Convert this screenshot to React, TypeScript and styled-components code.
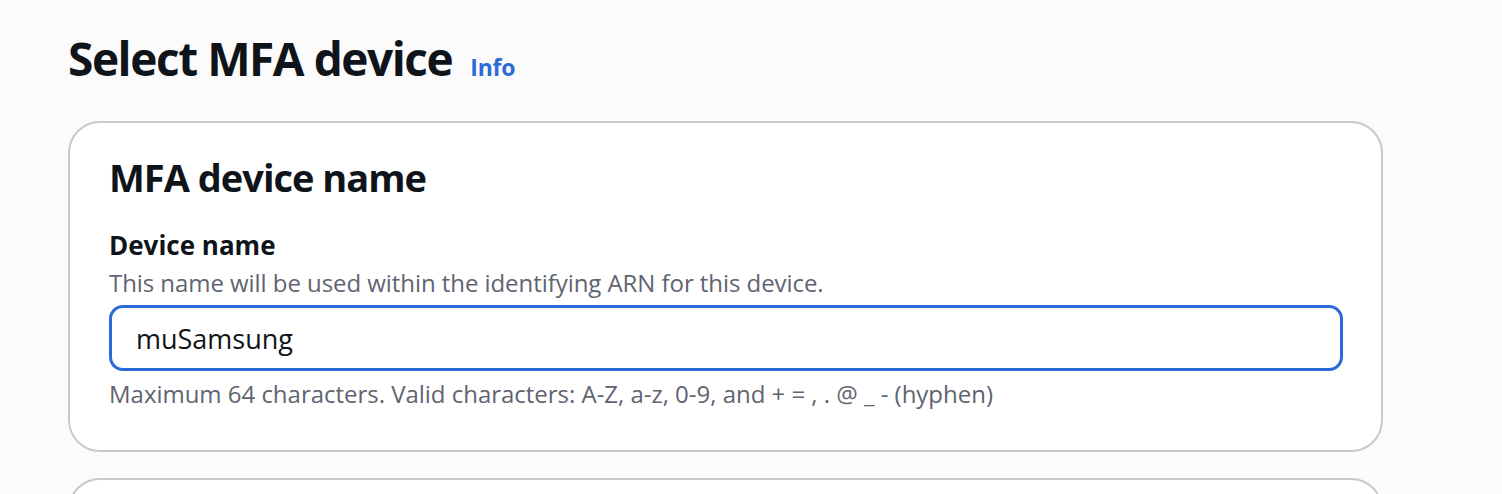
import React from "react";
import styled, { createGlobalStyle } from "styled-components";

const GlobalStyle = createGlobalStyle`
  html, body {
    margin: 0;
    padding: 0;
    background: #fbfbfb;
  }
  body {
    font-family: "Open Sans", "Noto Sans", sans-serif;
    color: #0f141a;
    overflow: hidden;
  }
`;

const Page = styled.main`
  padding: 30px 119px 0 68px;
  height: 494px;
  box-sizing: border-box;
`;

const HeaderRow = styled.div`
  display: flex;
  align-items: baseline;
  gap: 18px;
  margin-bottom: 35px;
`;

const Title = styled.h1`
  margin: 0;
  font-size: 46px;
  line-height: 56px;
  font-weight: 700;
  letter-spacing: -1.45px;
  color: #0f141a;
`;

const InfoLink = styled.a`
  font-size: 23px;
  font-weight: 700;
  color: #2b6bd8;
  text-decoration: none;
  letter-spacing: -0.2px;
`;

const Card = styled.section<{ $minHeight?: number }>`
  background: #ffffff;
  border: 2px solid #c8c8ce;
  border-radius: 32px;
  padding: 30px 38px 40px 39px;
  margin-bottom: 26px;
  ${(p) => (p.$minHeight ? `min-height: ${p.$minHeight}px;` : "")}
`;

const CardTitle = styled.h2`
  margin: 0 0 26px;
  font-size: 38px;
  line-height: 48px;
  font-weight: 700;
  letter-spacing: -1px;
  color: #0f141a;
`;

const Field = styled.div`
  display: flex;
  flex-direction: column;
`;

const Label = styled.label`
  font-size: 26px;
  line-height: 36px;
  font-weight: 700;
  letter-spacing: 0;
  color: #0f141a;
`;

const Description = styled.div`
  margin-top: 4px;
  font-size: 24px;
  line-height: 32px;
  letter-spacing: -0.06px;
  color: #5f6470;
`;

const Input = styled.input`
  margin-top: 6px;
  box-sizing: border-box;
  width: 100%;
  height: 66px;
  border: 3px solid #2b6bd8;
  border-radius: 14px;
  padding: 0 24px;
  font-family: "Open Sans", "Noto Sans", sans-serif;
  font-size: 27px;
  letter-spacing: 0;
  color: #0f141a;
  background: #ffffff;
  outline: none;
`;

const Hint = styled.div`
  margin-top: 7px;
  font-size: 24px;
  line-height: 32px;
  letter-spacing: -0.02px;
  color: #5f6470;
`;

export default function App() {
  return (
    <>
      <GlobalStyle />
      <Page>
        <HeaderRow>
          <Title>Select MFA device</Title>
          <InfoLink href="#">Info</InfoLink>
        </HeaderRow>
        <Card>
          <CardTitle>MFA device name</CardTitle>
          <Field>
            <Label htmlFor="device-name">Device name</Label>
            <Description>
              This name will be used within the identifying ARN for this device.
            </Description>
            <Input id="device-name" defaultValue="muSamsung" />
            <Hint>
              Maximum 64 characters. Valid characters: A-Z, a-z, 0-9, and + = , . @ _ - (hyphen)
            </Hint>
          </Field>
        </Card>
        <Card $minHeight={200} />
      </Page>
    </>
  );
}
